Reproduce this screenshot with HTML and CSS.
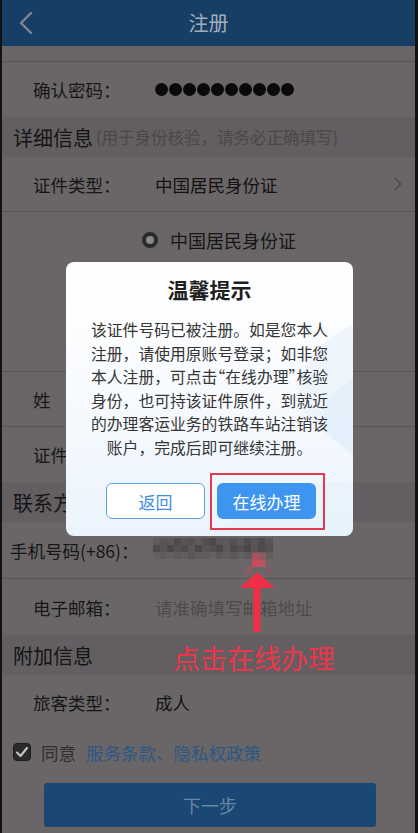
FILE: index.html
```html
<!DOCTYPE html>
<html lang="zh-CN">
<head>
<meta charset="utf-8">
<title>注册</title>
<link rel="stylesheet" href="styles.css">
</head>
<body>
<div class="screen">
  <header class="topbar">
    <svg class="back" width="16" height="24" viewBox="0 0 16 24"><polyline points="13,2 3,12 13,22" fill="none" stroke="#7b8a9a" stroke-width="2.4" stroke-linecap="round" stroke-linejoin="round"/></svg>
    <h1 class="title">注册</h1>
    <span></span>
  </header>
  <div class="strip"></div>
  <div class="row">
    <span class="label">确认密码：</span>
    <span class="dots"><i></i><i></i><i></i><i></i><i></i><i></i><i></i><i></i><i></i><i></i></span>
  </div>
  <div class="section">详细信息<span class="hint">(用于身份核验，请务必正确填写)</span></div>
  <div class="row line">
    <span class="label">证件类型：</span>
    <span class="value">中国居民身份证</span>
    <svg class="chev" width="9" height="16" viewBox="0 0 9 16"><polyline points="1.5,1.5 7.5,8 1.5,14.5" fill="none" stroke="#4d4a4c" stroke-width="1.6"/></svg>
  </div>
  <div class="picker line">
    <div class="option"><span class="radio"></span>中国居民身份证</div>
  </div>
  <div class="row line"><span class="label">姓　　名：</span></div>
  <div class="row"><span class="label">证件号码：</span></div>
  <div class="section">联系方式</div>
  <div class="row line phone">
    <span class="label wide">手机号码(+86)：</span>
    <svg class="mosaic" width="120" height="21" viewBox="0 0 120 21">
      <rect x="0" y="0" width="120" height="21" fill="#5c585a"/>
      <rect x="0" y="0" width="7" height="7" fill="#5f5b5d"/><rect x="7" y="0" width="7" height="7" fill="#57535a"/><rect x="14" y="0" width="7" height="7" fill="#5d595b"/><rect x="21" y="0" width="7" height="7" fill="#4f4b4d"/><rect x="28" y="0" width="7" height="7" fill="#595557"/><rect x="35" y="0" width="7" height="7" fill="#525052"/><rect x="42" y="0" width="7" height="7" fill="#5e5a5c"/><rect x="49" y="0" width="7" height="7" fill="#545052"/><rect x="56" y="0" width="7" height="7" fill="#4d494b"/><rect x="63" y="0" width="7" height="7" fill="#5a5658"/><rect x="70" y="0" width="7" height="7" fill="#5f5b5d"/><rect x="77" y="0" width="7" height="7" fill="#555153"/><rect x="84" y="0" width="7" height="7" fill="#5c585a"/><rect x="91" y="0" width="7" height="7" fill="#504c4e"/><rect x="98" y="0" width="7" height="7" fill="#585456"/><rect x="105" y="0" width="7" height="7" fill="#4e4a4c"/><rect x="112" y="0" width="8" height="7" fill="#5a5658"/>
      <rect x="0" y="7" width="7" height="7" fill="#4e4a4c"/><rect x="7" y="7" width="7" height="7" fill="#585456"/><rect x="14" y="7" width="7" height="7" fill="#4c484a"/><rect x="21" y="7" width="7" height="7" fill="#565254"/><rect x="28" y="7" width="7" height="7" fill="#4f4b4d"/><rect x="35" y="7" width="7" height="7" fill="#5b5759"/><rect x="42" y="7" width="7" height="7" fill="#4b4749"/><rect x="49" y="7" width="7" height="7" fill="#585456"/><rect x="56" y="7" width="7" height="7" fill="#535051"/><rect x="63" y="7" width="7" height="7" fill="#4c484a"/><rect x="70" y="7" width="7" height="7" fill="#5d595b"/><rect x="77" y="7" width="7" height="7" fill="#4e4a4c"/><rect x="84" y="7" width="7" height="7" fill="#555153"/><rect x="91" y="7" width="7" height="7" fill="#4b4749"/><rect x="98" y="7" width="7" height="7" fill="#57535a"/><rect x="105" y="7" width="7" height="7" fill="#4f4b4d"/><rect x="112" y="7" width="8" height="7" fill="#555153"/>
      <rect x="0" y="14" width="7" height="7" fill="#636061"/><rect x="7" y="14" width="7" height="7" fill="#5e5a5c"/><rect x="14" y="14" width="7" height="7" fill="#646062"/><rect x="21" y="14" width="7" height="7" fill="#5d595b"/><rect x="28" y="14" width="7" height="7" fill="#625e60"/><rect x="35" y="14" width="7" height="7" fill="#5a5658"/><rect x="42" y="14" width="7" height="7" fill="#615d5f"/><rect x="49" y="14" width="7" height="7" fill="#5f5b5d"/><rect x="56" y="14" width="7" height="7" fill="#656163"/><rect x="63" y="14" width="7" height="7" fill="#5c585a"/><rect x="70" y="14" width="7" height="7" fill="#625e60"/><rect x="77" y="14" width="7" height="7" fill="#5b5759"/><rect x="84" y="14" width="7" height="7" fill="#636061"/><rect x="91" y="14" width="7" height="7" fill="#5e5a5c"/><rect x="98" y="14" width="7" height="7" fill="#6f565d"/><rect x="105" y="14" width="7" height="7" fill="#7d5860"/><rect x="112" y="14" width="8" height="7" fill="#625e60"/>
    </svg>
  </div>
  <div class="row">
    <span class="label">电子邮箱：</span>
    <span class="placeholder">请准确填写邮箱地址</span>
  </div>
  <div class="section">附加信息</div>
  <div class="row">
    <span class="label">旅客类型：</span>
    <span class="value">成人</span>
  </div>
  <div class="agree">
    <span class="check"><svg width="14" height="12" viewBox="0 0 14 12"><polyline points="2,6.5 5.5,10 12,2" fill="none" stroke="#c9c9c9" stroke-width="2" stroke-linecap="round" stroke-linejoin="round"/></svg></span>
    <span class="agree-text">同意</span>
    <a class="agree-link">服务条款、隐私权政策</a>
  </div>
  <button class="next">下一步</button>
</div>

<div class="dialog">
  <svg class="dialog-deco" width="287" height="274" viewBox="0 0 287 274">
    <path d="M287 62 C255 78 222 112 236 146 C246 168 272 176 287 196 Z" fill="#e2eefa" opacity="0.45"/>
    <path d="M287 118 C262 130 250 150 262 170 C270 182 282 186 287 190 Z" fill="#d6e8f8" opacity="0.35"/>
    <path d="M150 274 C190 232 240 214 287 222 L287 274 Z" fill="#e6f1fc" opacity="0.55"/>
  </svg>
  <h2 class="dialog-title">温馨提示</h2>
  <p class="dialog-msg">该证件号码已被注册。如是您本人<br>注册，请使用原账号登录；如非您<br>本人注册，可点击<span class="q">“</span>在线办理<span class="q">”</span>核验<br>身份，也可持该证件原件，到就近<br>的办理客运业务的铁路车站注销该<br>账户，完成后即可继续注册。</p>
  <div class="actions">
    <button class="btn ghost">返回</button>
    <span class="focus"><button class="btn primary">在线办理</button><span class="mark"></span></span>
  </div>
</div>

<svg class="arrow" width="40" height="86" viewBox="0 0 40 86">
  <rect x="14" y="3" width="7" height="7" fill="#a9525e"/>
  <rect x="21" y="3" width="7" height="7" fill="#8e5a62"/>
  <rect x="14" y="10" width="7" height="7" fill="#c94a5a"/>
  <rect x="21" y="10" width="7" height="7" fill="#b55560"/>
  <rect x="7" y="17" width="7" height="7" fill="#8c5c65"/>
  <rect x="28" y="17" width="7" height="7" fill="#7d5c63"/>
  <polygon points="19,22 2,38 37,38" fill="#ee2f45"/>
  <rect x="15.5" y="37" width="7" height="45" fill="#ee2f45"/>
</svg>
<div class="tip">点击在线办理</div>
</body>
</html>
```

FILE: styles.css
```css
* { box-sizing: border-box; margin: 0; padding: 0; }
html, body { background: #121212; }
body {
  position: relative;
  width: 418px;
  height: 833px;
  overflow: hidden;
  font-family: "Noto Sans CJK SC", "Noto Sans", sans-serif;
  color: #161616;
}
.screen {
  width: 418px;
  height: 833px;
  background: #6a6668;
  border-left: 2px solid #121212;
  border-right: 3px solid #121212;
  display: flex;
  flex-direction: column;
}
.topbar {
  height: 46px;
  flex: none;
  background: #173e65;
  display: grid;
  grid-template-columns: 1fr auto 1fr;
  align-items: center;
}
.back { margin-left: 16px; }
.title {
  font-size: 20px;
  font-weight: 400;
  color: #a4aeba;
  line-height: 1;
}
.strip {
  height: 16px;
  flex: none;
  border-bottom: 1px solid #5a5658;
}
.row {
  height: 55px;
  flex: none;
  display: flex;
  align-items: center;
  padding-left: 31px;
  font-size: 17.5px;
}
.row.line { border-bottom: 1px solid #5a5658; }
.label {
  width: 122px;
  flex: none;
  white-space: nowrap;
}
.value { color: #121212; }
.placeholder { color: #4d4a4c; }
.dots {
  display: flex;
  gap: 1px;
}
.dots i {
  width: 13px;
  height: 13px;
  border-radius: 50%;
  background: #0a0a0a;
}
.chev {
  margin-left: auto;
  margin-right: 13px;
}
.section {
  height: 40px;
  flex: none;
  background: #625e61;
  display: flex;
  align-items: center;
  padding-left: 11px;
  font-size: 20px;
  color: #141414;
}
.hint {
  font-size: 16.5px;
  color: #4a4749;
  margin-left: 3px;
}
.picker {
  height: 160px;
  flex: none;
}
.picker.line { border-bottom: 1px solid #5a5658; }
.option {
  height: 56px;
  display: flex;
  align-items: center;
  padding-left: 140px;
  font-size: 18px;
  color: #151515;
}
.radio {
  width: 16px;
  height: 16px;
  border-radius: 50%;
  border: 4.5px solid #2b2a2c;
  background: #8a898b;
  margin-right: 12px;
}
.phone { padding-left: 8px; height: 57px; }
.label.wide { width: 143px; }
.mosaic { margin-top: -4px; }
.row.phone + .row { height: 56px; }
.agree {
  height: 44px;
  flex: none;
  display: flex;
  align-items: center;
  padding-left: 11px;
  font-size: 17.5px;
}
.check {
  width: 18px;
  height: 18px;
  border-radius: 4px;
  background: #2a292b;
  border: 1px solid #1c1b1d;
  display: flex;
  align-items: center;
  justify-content: center;
}
.agree-text {
  margin-left: 10px;
  color: #2f2e30;
}
.agree-link {
  margin-left: 10px;
  color: #2c5885;
}
.next {
  margin: 9px 39px 0 42px;
  height: 44px;
  flex: none;
  border: none;
  border-radius: 3px;
  background: #1b4775;
  color: #6885a2;
  font-family: inherit;
  font-size: 18px;
}

.dialog {
  position: absolute;
  left: 66px;
  top: 262px;
  width: 287px;
  height: 274px;
  border-radius: 8px;
  background: linear-gradient(180deg, #ffffff 0%, #f8fbfe 45%, #ebf4fd 100%);
  padding: 12px 0 0;
  overflow: hidden;
}
.dialog-deco {
  position: absolute;
  left: 0;
  top: 0;
}
.dialog-title {
  position: relative;
  text-align: center;
  font-size: 21px;
  font-weight: 700;
  line-height: 30px;
  color: #1f1f1f;
}
.dialog-msg {
  position: relative;
  margin-top: 14px;
  text-align: center;
  white-space: nowrap;
  font-size: 15.8px;
  line-height: 23.5px;
  color: #353535;
}
.q { font-feature-settings: "halt" 1; }
.actions {
  position: relative;
  margin-top: 24px;
  display: flex;
  gap: 12px;
  padding-left: 40px;
}
.btn {
  width: 99px;
  height: 36px;
  border-radius: 6px;
  font-family: inherit;
  font-size: 17px;
}
.ghost {
  background: #ffffff;
  border: 1.5px solid #5e9fe6;
  color: #3f8fe2;
}
.primary {
  background: #3e95ef;
  border: none;
  color: #ffffff;
}
.focus {
  position: relative;
  display: block;
}
.mark {
  position: absolute;
  left: -7px;
  top: -10px;
  width: 115px;
  height: 57px;
  border: 2px solid #e53a4e;
}

.arrow {
  position: absolute;
  left: 238px;
  top: 550px;
}
.tip {
  position: absolute;
  left: 173px;
  top: 643px;
  font-size: 27px;
  line-height: 30px;
  color: #f0354b;
  white-space: nowrap;
}
```
